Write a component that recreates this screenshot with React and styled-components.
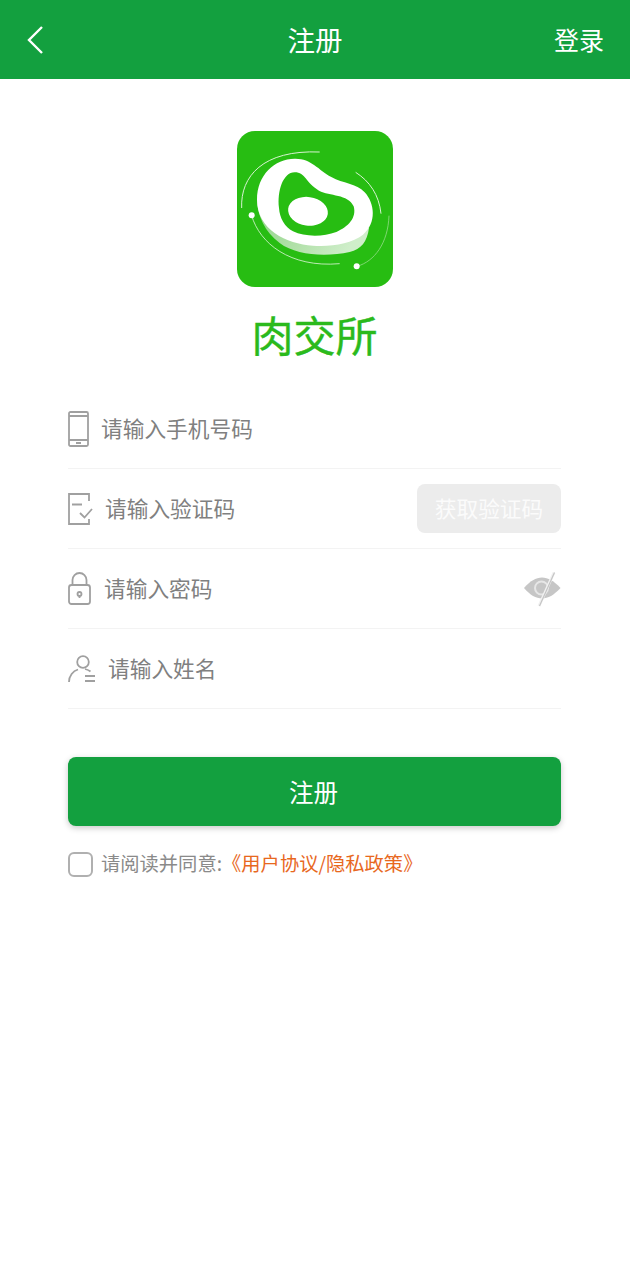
import React from "react";
import styled, { createGlobalStyle } from "styled-components";

const GlobalStyle = createGlobalStyle`
  html, body {
    margin: 0;
    padding: 0;
    background: #fff;
    font-family: "Noto Sans CJK SC", "Noto Sans", sans-serif;
  }
  * { box-sizing: border-box; }
`;

const Page = styled.div`
  width: 630px;
  height: 1280px;
  background: #fff;
  overflow: hidden;
`;

const Header = styled.header`
  height: 79px;
  background: #13a03f;
  display: flex;
  align-items: center;
  justify-content: space-between;
  padding: 0 26px;
  color: #fff;
  position: relative;
`;

const BackIcon = styled.svg`
  width: 18px;
  height: 30px;
  display: block;
`;

const HeaderTitle = styled.div`
  position: absolute;
  left: 0;
  right: 0;
  text-align: center;
  font-size: 27.5px;
  line-height: 79px;
`;

const HeaderLink = styled.div`
  font-size: 25px;
  line-height: 79px;
`;

const Main = styled.main`
  padding: 52px 69px 0 68px;
  display: flex;
  flex-direction: column;
`;

const LogoBlock = styled.div`
  display: flex;
  flex-direction: column;
  align-items: center;
  margin-bottom: 23px;
`;

const LogoIcon = styled.svg`
  width: 156px;
  height: 156px;
  display: block;
`;

const BrandName = styled.div`
  font-size: 42px;
  font-weight: 400;
  line-height: 56px;
  margin-top: 19px;
  height: 60px;
  color: #2bba1c;
  -webkit-text-stroke: 0.4px #2bba1c;
`;

const Row = styled.div`
  height: 80px;
  display: flex;
  align-items: center;
  border-bottom: 1px solid #f3f3f3;
  gap: ${(p) => p.$gap}px;
`;

const RowIcon = styled.svg`
  display: block;
  flex: none;
  color: #a0a0a0;
`;

const Placeholder = styled.div`
  flex: 1;
  font-size: 21.7px;
  color: #808080;
  line-height: 30px;
  padding-bottom: 2px;
  height: 32px;
`;

const CodeButton = styled.div`
  width: 144px;
  height: 49px;
  background: #ececec;
  border-radius: 8px;
  color: #fbfbfb;
  font-size: 21.7px;
  display: flex;
  align-items: center;
  justify-content: center;
  padding-bottom: 3px;
`;

const SubmitButton = styled.div`
  margin-top: 48px;
  height: 69px;
  background: #13a03f;
  border-radius: 8px;
  box-shadow: 0 2px 6px rgba(0, 0, 0, 0.22);
  color: #fff;
  font-size: 24.5px;
  display: flex;
  align-items: center;
  justify-content: center;
  padding: 0 2px 1px 0;
`;

const Agreement = styled.div`
  margin-top: 24px;
  display: flex;
  align-items: center;
  gap: 9px;
  font-size: 19.3px;
  line-height: 26px;
  color: #8a8a8a;
`;

const CheckBox = styled.div`
  width: 25px;
  height: 25px;
  border: 2px solid #b0b0b0;
  border-radius: 6px;
`;

const AgreementText = styled.div`
  margin-left: -1px;
  padding-bottom: 2px;
`;

const AgreementLink = styled.span`
  color: #e8681e;
`;

const Logo = () => (
  <LogoIcon viewBox="52 34 468 468">
    <defs>
      <linearGradient id="meatSide" x1="0" y1="0" x2="1" y2="0.3">
        <stop offset="0" stopColor="#8fd486" />
        <stop offset="0.6" stopColor="#b5e2ad" />
        <stop offset="1" stopColor="#cfeeca" />
      </linearGradient>
    </defs>
    <rect x="52" y="34" width="468" height="468" rx="54" fill="#27bd12" />
    <path
      d="M112 240 C114 290 135 335 180 370 C230 408 320 412 390 397 C425 388 442 368 448 325 L300 300 Z"
      fill="url(#meatSide)"
    />
    <path
      d="M112 240 C112 165 165 118 225 117 C275 116 295 150 335 172 C370 192 410 190 435 218 C465 250 472 310 430 345 C395 372 335 382 280 378 C200 372 112 330 112 240 Z"
      fill="#fff"
    />
    <path
      d="M178 265 C172 215 190 158 225 158 C258 158 258 190 298 213 C330 230 385 222 402 260 C412 295 385 322 350 337 C310 352 255 352 220 335 C195 322 180 295 178 265 Z"
      fill="#27bd12"
    />
    <ellipse cx="265" cy="275" rx="60" ry="43" transform="rotate(8 265 275)" fill="#fff" />
    <path d="M66 265 C62 170 130 90 300 97" fill="none" stroke="#d8f3d2" strokeWidth="3" />
    <path d="M408 158 C450 185 478 225 484 282" fill="none" stroke="#d8f3d2" strokeWidth="3" />
    <path d="M96 288 C120 370 210 445 360 432" fill="none" stroke="#d8f3d2" strokeWidth="2.500" />
    <path d="M412 440 C465 425 505 370 508 288" fill="none" stroke="#a9e3a0" strokeWidth="2" />
    <circle cx="96" cy="287" r="9" fill="#fff" />
    <circle cx="411" cy="440" r="9" fill="#fff" />
  </LogoIcon>
);

const PhoneIcon = () => (
  <RowIcon width="21" height="36" viewBox="0 0 21 36" fill="none" stroke="currentColor" strokeWidth="1.800">
    <rect x="1" y="1" width="19" height="34" rx="1.500" />
    <path d="M1 5h19M1 29h19M8 32h5" />
  </RowIcon>
);

const CodeIcon = () => (
  <RowIcon width="25" height="32" viewBox="0 0 25 32" fill="none" stroke="currentColor" strokeWidth="1.800">
    <path d="M21 8V1H1v30h20v-5" />
    <path d="M4 11.500h10" strokeWidth="2" />
    <path d="M12 20l4.500 4.500L24 16" />
  </RowIcon>
);

const LockIcon = () => (
  <RowIcon width="23" height="33" viewBox="0 0 23 33" fill="none" stroke="currentColor" strokeWidth="1.800">
    <rect x="1" y="13" width="21" height="19" rx="2.500" />
    <path d="M4.500 13V8a7 7 0 0 1 14 0v5" />
    <circle cx="11.500" cy="22" r="2" />
    <path d="M11.500 24v2" />
  </RowIcon>
);

const UserIcon = () => (
  <RowIcon width="27" height="28" viewBox="0 0 27 28" fill="none" stroke="currentColor" strokeWidth="1.800">
    <circle cx="15" cy="7" r="5.800" />
    <path d="M1 27c0-6 4-11 9-12.500M17 14c2 .5 4 1.200 5.500 2.500" />
    <path d="M17 21h10M17 26h10" />
  </RowIcon>
);

const EyeIcon = () => (
  <RowIcon width="38" height="36" viewBox="0 0 38 36">
    <path d="M1 17C7 10 13 6.500 19 6.500S31 10 37.500 17C31 24 25 27.500 19 27.500S7 24 1 17Z" fill="#c6c6c6" />
    <circle cx="18.500" cy="17" r="6.500" fill="none" stroke="#e6e6e6" strokeWidth="2" />
    <path d="M31 1.500 16 35" stroke="#f2f2f2" strokeWidth="3" />
    <path d="M31.500 1.500 16.500 35" stroke="#c4c4c4" strokeWidth="1.200" />
  </RowIcon>
);

export default function App() {
  return (
    <Page>
      <GlobalStyle />
      <Header>
        <BackIcon viewBox="0 0 18 30" fill="none" stroke="#fff" strokeWidth="2.400">
          <path d="M16 2 3 15l13 13" />
        </BackIcon>
        <HeaderTitle>注册</HeaderTitle>
        <HeaderLink>登录</HeaderLink>
      </Header>
      <Main>
        <LogoBlock>
          <Logo />
          <BrandName>肉交所</BrandName>
        </LogoBlock>
        <Row $gap={12}>
          <PhoneIcon />
          <Placeholder>请输入手机号码</Placeholder>
        </Row>
        <Row $gap={12}>
          <CodeIcon />
          <Placeholder>请输入验证码</Placeholder>
          <CodeButton>获取验证码</CodeButton>
        </Row>
        <Row $gap={13}>
          <LockIcon />
          <Placeholder>请输入密码</Placeholder>
          <EyeIcon />
        </Row>
        <Row $gap={13}>
          <UserIcon />
          <Placeholder>请输入姓名</Placeholder>
        </Row>
        <SubmitButton>注册</SubmitButton>
        <Agreement>
          <CheckBox />
          <AgreementText>
            请阅读并同意:<AgreementLink>《用户协议/隐私政策》</AgreementLink>
          </AgreementText>
        </Agreement>
      </Main>
    </Page>
  );
}
